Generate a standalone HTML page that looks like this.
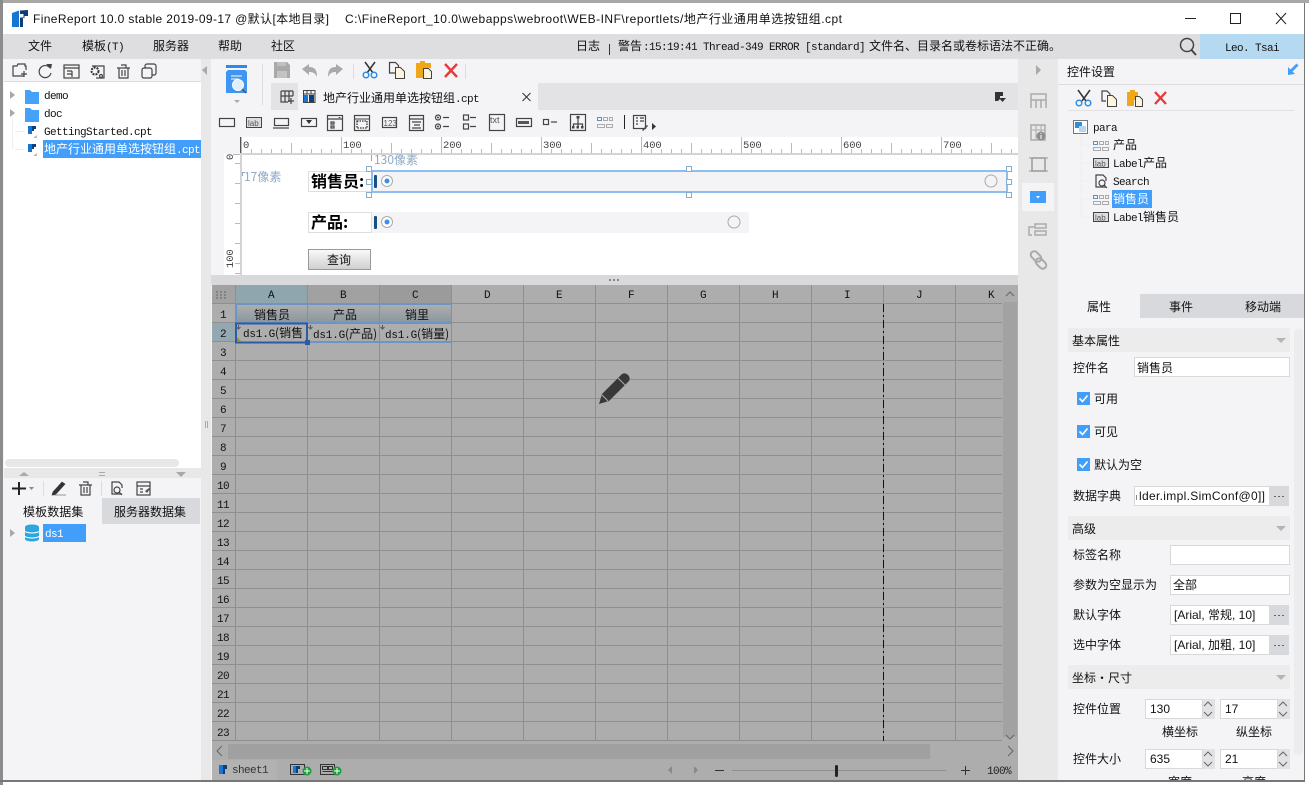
<!DOCTYPE html>
<html><head><meta charset="utf-8"><title>FineReport</title>
<style>
html,body{margin:0;padding:0;width:1309px;height:785px;overflow:hidden;background:#fff}
svg{display:block}
text{font-family:"WenQuanYi Zen Hei","Noto Sans CJK SC",sans-serif;font-size:12px;fill:#111;white-space:pre}
.m{font-family:"Liberation Mono","WenQuanYi Zen Hei",monospace;font-size:11px;letter-spacing:-.6px}
.r{font-family:"Liberation Mono",monospace;font-size:10.500px;letter-spacing:-.1px;fill:#444}
.a{font-family:"Liberation Sans","WenQuanYi Zen Hei",sans-serif;font-size:12px}
.c{text-anchor:middle}
.i{fill:none;stroke:#444;stroke-width:1.2}
.g{fill:none;stroke:#666;stroke-width:1.2}
.lb{fill:#8fa9c4;font-size:12px}
</style></head><body>
<svg width="1309" height="785" viewBox="0 0 1309 785" xmlns="http://www.w3.org/2000/svg">
<defs>
<linearGradient id="h" x1="0" y1="0" x2="0" y2="1"><stop offset="0" stop-color="#aeaeae"/><stop offset="1" stop-color="#8a979e"/></linearGradient>
<linearGradient id="b" x1="0" y1="0" x2="0" y2="1"><stop offset="0" stop-color="#fafafa"/><stop offset="1" stop-color="#cfcfcf"/></linearGradient>
<pattern id="gridc" x="236" y="0" width="72" height="785" patternUnits="userSpaceOnUse"><rect x="71" width="1" height="785" fill="#8f8f8f"/></pattern>
<pattern id="gridr" x="0" y="285" width="1309" height="19" patternUnits="userSpaceOnUse"><rect y="18" width="1309" height="1" fill="#8f8f8f"/></pattern>
<pattern id="rul" x="241" y="137" width="100" height="16" patternUnits="userSpaceOnUse">
<path d="M0.500 0V16M10.500 12V16M20.500 12V16M30.500 12V16M40.500 12V16M50.500 6V16M60.500 12V16M70.500 12V16M80.500 12V16M90.500 12V16" stroke="#bbb" fill="none"/></pattern>
</defs>

<!-- window -->
<rect width="1309" height="785" fill="#fff"/>
<rect x="0" y="0" width="1309" height="3" fill="#a8a8a6"/>
<rect x="0" y="0" width="3" height="785" fill="#8c8c8c"/>
<rect x="3" y="3" width="1301" height="31" fill="#fff"/>
<rect x="3" y="34" width="1301" height="25" fill="#dedee0"/>
<rect x="3" y="59" width="1301" height="721" fill="#f4f4f6"/>
<rect x="0" y="780" width="1305" height="2" fill="#777"/>
<rect x="1304" y="3" width="1" height="778" fill="#777"/>

<!-- title bar -->
<path d="M12 13l7-2.500V27h-7z" fill="#1677d2"/><path d="M20 10.500l8-.500v6h-3.500v2H23v9h-3z" fill="#0c3f78"/><path d="M20 14h3.500v3.500H20z" fill="#fff"/>
<text class="a" x="33" y="23" textLength="296" lengthAdjust="spacing">FineReport 10.0 stable 2019-09-17 @默认[本地目录]</text>
<text class="a" x="345" y="23" textLength="497" lengthAdjust="spacing">C:\FineReport_10.0\webapps\webroot\WEB-INF\reportlets/地产行业通用单选按钮组.cpt</text>
<path d="M1185 18.500h11" stroke="#222" fill="none"/>
<rect x="1230.500" y="13.500" width="10" height="10" fill="none" stroke="#222"/>
<path d="M1276 13l10 11M1286 13l-10 11" stroke="#222" fill="none"/>

<!-- menu -->
<text x="28" y="50">文件</text>
<text x="82" y="50">模板<tspan class="m">(T)</tspan></text>
<text x="153" y="50">服务器</text>
<text x="218" y="50">帮助</text>
<text x="271" y="50">社区</text>
<text x="576" y="50">日志</text>
<rect x="609" y="44" width="1" height="11" fill="#333"/>
<text x="618" y="50">警告</text>
<text class="m" x="643" y="50">:15:19:41 Thread-349 ERROR [standard]</text>
<text x="869" y="50">文件名、目录名或卷标语法不正确。</text>
<circle cx="1187" cy="45" r="6.500" fill="none" stroke="#444" stroke-width="1.500"/><path d="M1191.500 50l4.500 5" stroke="#444" stroke-width="2"/>
<rect x="1200" y="34" width="104" height="25" fill="#b5d9f1"/>
<text class="m c" x="1252" y="51">Leo. Tsai</text>

<!-- left panel -->
<rect x="4" y="82" width="197" height="386" fill="#fff"/>
<rect x="4" y="81" width="197" height="1" fill="#dcdcdc"/>
<rect x="201" y="59" width="10" height="721" fill="#e8e8e9"/>
<path d="M207 66l-5 4 5 5z" fill="#a9a9a9"/>
<path d="M205.500 421v7M207.500 421v7" stroke="#aaa" fill="none"/>
<!-- left toolbar -->
<path class="i" d="M24 76h-11V66h4l1-2h7v2h1v4M21 74h6M24 71v6"/>
<path d="M50 68a6 6 0 1 0 1 5" class="i" stroke-width="1.500"/><path d="M46 64l6 0-1 5z" fill="#444"/>
<rect class="i" x="64" y="65" width="15" height="13"/><path class="i" d="M64 68h15M67 71h5M67 74h5M72 71v6"/>
<path class="i" d="M92 66h12v12h-8"/><circle cx="95" cy="71" r="3.500" fill="none" stroke="#333" stroke-width="2" stroke-dasharray="2 1"/><circle cx="101" cy="76" r="1.500" class="i"/>
<path class="i" d="M117 68h13M119 68v10h9V68M121 65h5v3M122 70v6M125 70v6"/>
<rect class="i" x="142" y="68" width="10" height="10" rx="2"/><path class="i" d="M145 68v-2a2 2 0 0 1 2-2h7a2 2 0 0 1 2 2v7a2 2 0 0 1-2 2h-2"/>
<!-- left tree -->
<path d="M10 91l5 4-5 4zM10 109l5 4-5 4z" fill="#a8a8a8"/>
<path d="M15 131.500h10M15 149.500h10M12.500 118v31" stroke="#eee" fill="none"/>
<path d="M25 90h5l2 2h7v12H25z" fill="#46a1fa"/>
<path d="M25 108h5l2 2h7v12H25z" fill="#46a1fa"/>
<text class="m" x="44" y="99">demo</text>
<text class="m" x="44" y="117">doc</text>
<rect x="26" y="125" width="11" height="13" fill="#fff"/><path d="M28 126h4v8h-4z" fill="#1677d2"/><path d="M32 126h4v3h-2v2h-2z" fill="#0c3f78"/><path d="M33 138l4-3v3z" fill="#bbb"/>
<rect x="26" y="143" width="11" height="13" fill="#fff"/><path d="M28 144h4v8h-4z" fill="#1677d2"/><path d="M32 144h4v3h-2v2h-2z" fill="#0c3f78"/><path d="M33 156l4-3v3z" fill="#bbb"/>
<text class="m" x="44" y="135">GettingStarted.cpt</text>
<rect x="43" y="140" width="158" height="18" fill="#429efb"/>
<text x="44" y="153" style="fill:#fff">地产行业通用单选按钮组<tspan class="m" style="fill:#fff">.cpt</tspan></text>
<rect x="5" y="459" width="174" height="8" rx="4" fill="#e7e7e7"/>
<rect x="4" y="468" width="197" height="10" fill="#e8e8e9"/>
<path d="M19 476l5-4 5 4z" fill="#a9a9a9"/><path d="M176 472h10l-5 5z" fill="#a9a9a9"/><path d="M99 472.500h6M99 475.500h6" stroke="#aaa" fill="none"/>
<!-- data toolbar -->
<path d="M12 488.500h14M19 482v13" stroke="#222" stroke-width="2" fill="none"/><path d="M29 487h5l-2.500 3z" fill="#888"/>
<rect x="43" y="481" width="1" height="15" fill="#ddd"/><rect x="101" y="481" width="1" height="15" fill="#ddd"/>
<path d="M53 492l9-10 3 2-9 10-4 1zM52 495h14" fill="#333" stroke="#333" stroke-width=".6"/>
<path class="i" d="M79 485h13M81 485v10h9v-10M83 482h5v3M84 487v6M87 487v6"/>
<path class="i" d="M122 494h-10V482h7l3 3v3"/><circle cx="117" cy="490" r="3" class="i"/><path class="i" d="M119 492l3 3"/>
<rect class="i" x="137" y="482" width="13" height="13"/><path class="i" d="M137 486h13M140 489h3M140 492h3"/><path d="M145 491l4-3 1 1-3 4z" fill="#555"/>
<rect x="102" y="498" width="98" height="26" fill="#d8d9dc"/>
<text x="23" y="516" style="font-size:12px;letter-spacing:.1px">模板数据集</text>
<text x="114" y="516">服务器数据集</text>
<path d="M10 529l5 4-5 4z" fill="#a8a8a8"/>
<path d="M25 527a7 2.500 0 0 1 14 0v12a7 2.500 0 0 1-14 0z" fill="#2ba6e0"/><path d="M25 531a7 2 0 0 0 14 0M25 536a7 2 0 0 0 14 0" stroke="#fff" fill="none"/>
<rect x="43" y="524" width="43" height="18" fill="#429efb"/>
<text class="m" x="45" y="537" style="fill:#fff">ds1</text>

<!-- main toolbar -->
<rect x="226" y="65" width="21" height="3" fill="#2a8bef"/>
<path d="M228 70h17l2 2v21h-21V72z" fill="#3f96f2"/>
<path d="M231 76h11M231 79h8" stroke="#fff" fill="none"/>
<circle cx="238" cy="85" r="5.500" fill="#dfeefb" stroke="#fff"/><path d="M242 89l4 4" stroke="#555" stroke-width="1.500"/>
<path d="M234 100h6l-3 3z" fill="#aaa"/>
<rect x="262" y="64" width="1" height="41" fill="#ddd"/>
<path d="M274 62h13l3 3v13h-16z" fill="#a9a9a9"/><rect x="277" y="71" width="10" height="7" fill="#c3c3c3"/><rect x="277" y="62" width="9" height="4" fill="#bfbfbf"/>
<path d="M302 69l7-5v3c6 0 8 3 8 10-2-4-4-5-8-5v3z" fill="#a9a9a9"/>
<path d="M343 69l-7-5v3c-6 0-8 3-8 10 2-4 4-5 8-5v3z" fill="#a9a9a9"/>
<rect x="353" y="64" width="1" height="15" fill="#ddd"/>
<path d="M365 62l8 11M375 62l-8 11" stroke="#333" stroke-width="1.500" fill="none"/><circle cx="366" cy="75" r="2.800" fill="none" stroke="#2b8de8" stroke-width="1.500"/><circle cx="374" cy="75" r="2.800" fill="none" stroke="#2b8de8" stroke-width="1.500"/>
<path class="i" d="M395 73h-5.500V62.500h6l3 3v2"/><path d="M395.500 67.500h5l4 4v7h-9z" fill="#fdf5de" stroke="#444"/>
<path d="M416 63h4v-2h5v2h6v5h-7v10h-8z" fill="#f0a81a"/><path d="M423.500 68.500h5l3 3v7h-8z" fill="#fdf5de" stroke="#444"/>
<path d="M445 64l12 13M457 64l-12 13" stroke="#e63b3b" stroke-width="2.400" fill="none"/>
<rect x="465" y="64" width="1" height="15" fill="#ddd"/>

<!-- tab bar -->
<rect x="271" y="83" width="747" height="27" fill="#e3e3e5"/>
<rect x="298" y="83" width="240" height="27" fill="#f4f4f6"/>
<path class="i" d="M281 91h12M281 96h12M285 91v11M289 91v11M281 91v11h7M293 91v5M291 98v6M288 101h6"/>
<rect x="303.500" y="90.500" width="11.500" height="12" fill="none" stroke="#444"/><path d="M303 94h12M307 90v4M311 90v4" stroke="#444" fill="none"/><rect x="304" y="95" width="4" height="7" fill="#1677d2"/><rect x="309" y="95" width="5" height="7" fill="#0c3f78"/>
<text x="323" y="102">地产行业通用单选按钮组<tspan class="m">.cpt</tspan></text>
<path d="M522.500 93l8 8M530.500 93l-8 8" stroke="#333" fill="none"/>
<path d="M995 92h8v4h-3v3l-2 2h-3z" fill="#333"/><path d="M999 98h7l-3.500 4z" fill="#333"/>

<!-- widget toolbar -->
<rect class="i" x="219.500" y="118.500" width="15" height="8"/>
<rect x="246.500" y="117.500" width="15" height="10" fill="#ddd" stroke="#444"/><text class="a" x="248" y="126" style="font-size:8px;fill:#555">lab</text>
<rect class="i" x="274.500" y="118.500" width="14" height="7"/><path class="i" d="M273 128h16"/>
<rect class="i" x="301.500" y="118.500" width="15" height="8"/><path d="M306 120h6l-3 4z" fill="#333"/>
<rect class="i" x="327.500" y="115.500" width="15" height="15"/><path class="i" d="M327 119h15M331 122h3v2h-3zM331 126h3v2h-3z"/><path d="M338 117h3l-1.500 1z" fill="#333"/>
<rect class="i" x="354.500" y="115.500" width="15" height="15"/><path d="M354 119h15" stroke="#444"/><path d="M357 121h10v7h-10z" fill="none" stroke="#333" stroke-width="1.300" stroke-dasharray="1.500 1"/>
<rect class="i" x="382.500" y="117.500" width="14" height="10"/><text class="a" x="383.500" y="126" style="font-size:8px;fill:#555">123</text>
<rect class="i" x="409.500" y="115.500" width="14" height="15"/><path class="i" d="M409 119h15M412 122h9M414 125h6M412 128h9"/>
<circle cx="438" cy="117.500" r="2.500" class="i"/><circle cx="438" cy="126.500" r="2.500" class="i"/><circle cx="438" cy="117.500" r="1" fill="#444"/><circle cx="438" cy="126.500" r="1" fill="#444"/><path class="i" d="M443 117.500h6M443 126.500h6"/>
<rect class="i" x="463.500" y="115" width="5" height="5"/><rect class="i" x="463.500" y="124" width="5" height="5"/><path class="i" d="M470 117.500h6M470 126.500h6"/>
<rect class="i" x="489.500" y="114.500" width="15" height="16"/><text class="a" x="490" y="123" style="font-size:9px;fill:#555">txt</text>
<rect class="i" x="516.500" y="118.500" width="15" height="8"/><path d="M518 121h11v3h-11z" fill="#555"/>
<rect class="i" x="543.500" y="119.500" width="5" height="5"/><path class="i" d="M551 122h6"/>
<rect class="i" x="570.500" y="114.500" width="15" height="16"/><path class="i" d="M578 118v5M573.500 127v-3h9v3M578 123v4"/><rect x="576.500" y="116" width="3" height="2.500" fill="#444"/><rect x="572" y="126" width="2.500" height="2.500" fill="#444"/><rect x="576.500" y="126" width="2.500" height="2.500" fill="#444"/><rect x="581" y="126" width="2.500" height="2.500" fill="#444"/>
<path d="M597.500 117.500h4v3h-4z" fill="none" stroke="#6a8db8"/><path d="M603.500 117.500h4v3h-4zM609.500 117.500h3v3h-3zM597.500 124.500h7v3h-7zM606.500 124.500h6v3h-6z" fill="none" stroke="#aaa"/>
<rect x="624" y="115" width="1" height="14" fill="#222"/>
<rect class="i" x="633.500" y="115.500" width="12" height="13"/><path class="i" d="M636 118h2M640 118h4M636 121h2M640 121h4M636 124h2"/><path d="M642 130l5-5 1 1-5 5z" fill="#444"/>
<path d="M652 123l4 3.500-4 3.500z" fill="#333"/>

<!-- rulers -->
<rect x="241" y="137" width="777" height="16" fill="#fff"/>
<rect x="241" y="137" width="777" height="16" fill="url(#rul)"/>
<rect x="224" y="154" width="17" height="121" fill="#fff"/>
<rect x="241" y="153" width="777" height="2" fill="#d4d4d4"/>
<rect x="240" y="137" width="1" height="16" fill="#555"/>
<rect x="240" y="153" width="2" height="122" fill="#d4d4d4"/>
<rect x="242" y="155" width="776" height="120" fill="#fff"/>
<text class="r" x="243" y="148">0</text>
<text class="r" x="343" y="148">100</text>
<text class="r" x="443" y="148">200</text>
<text class="r" x="543" y="148">300</text>
<text class="r" x="643" y="148">400</text>
<text class="r" x="743" y="148">500</text>
<text class="r" x="843" y="148">600</text>
<text class="r" x="943" y="148">700</text>
<path d="M235 163.500h5M235 183.500h5M235 203.500h5M235 223.500h5M235 243.500h5M235 263.500h5M235 273.500h5M233 154.500h7" stroke="#bbb" fill="none"/>
<text class="r" transform="translate(233,160) rotate(-90)">0</text>
<text class="r" transform="translate(233,268) rotate(-90)">100</text>

<!-- parameter canvas -->
<text class="lb" x="374" y="164">130像素</text>
<path d="M371.500 155v6" stroke="#8fa9c4" fill="none"/>
<text class="lb" x="244" y="181">17像素</text>
<path d="M242 172.500h3M242.500 172v4" stroke="#8fa9c4" fill="none"/>
<rect x="308.500" y="171.500" width="63" height="20" fill="#fff" stroke="#ddd"/>
<text x="311" y="187" style="font-size:16px;font-weight:bold;fill:#000">销售员:</text>
<rect x="372" y="171" width="635" height="21" fill="#f4f4f6" stroke="#8dbef0" stroke-width="2"/>
<rect x="374" y="175" width="3" height="13" rx="1" fill="#1a4f82"/>
<circle cx="387" cy="181" r="5.500" fill="#fff" stroke="#aaa"/><circle cx="387" cy="181" r="2.500" fill="#3b8ff0"/>
<circle cx="991" cy="181" r="6" fill="#f4f4f6" stroke="#aaa"/>
<g fill="#fff" stroke="#8aaccc"><rect x="366.500" y="166.500" width="5" height="5"/><rect x="686.500" y="166.500" width="5" height="5"/><rect x="1006.500" y="166.500" width="5" height="5"/><rect x="366.500" y="179.500" width="5" height="5"/><rect x="1006.500" y="179.500" width="5" height="5"/><rect x="366.500" y="192.500" width="5" height="5"/><rect x="686.500" y="192.500" width="5" height="5"/><rect x="1006.500" y="192.500" width="5" height="5"/></g>
<rect x="308.500" y="212.500" width="63" height="20" fill="#fff" stroke="#ddd"/>
<text x="311" y="228" style="font-size:16px;font-weight:bold;fill:#000">产品:</text>
<rect x="372" y="212" width="377" height="21" fill="#f4f4f6"/>
<rect x="374" y="216" width="3" height="13" rx="1" fill="#1a4f82"/>
<circle cx="387" cy="222" r="5.500" fill="#fff" stroke="#aaa"/><circle cx="387" cy="222" r="2.500" fill="#3b8ff0"/>
<circle cx="734" cy="222" r="6" fill="#f4f4f6" stroke="#aaa"/>
<rect x="308.500" y="249.500" width="62" height="20" fill="url(#b)" stroke="#999"/>
<text class="c" x="339" y="264">查询</text>

<!-- splitter -->
<rect x="211" y="275" width="807" height="10" fill="#d9d9db"/>
<path d="M609 280h2M613 280h2M617 280h2" stroke="#888" stroke-width="2" fill="none"/>

<!-- grid -->
<rect x="212" y="285" width="806" height="495" fill="#adadad"/>
<rect x="236" y="285" width="766" height="456" fill="url(#gridc)"/>
<rect x="212" y="285" width="790" height="456" fill="url(#gridr)"/>
<rect x="235" y="285" width="1" height="456" fill="#8f8f8f"/>
<rect x="212" y="285" width="23" height="18" fill="#a2a2a2"/>
<path d="M216 292h2M220 292h2M224 292h2M216 295h2M220 295h2M224 295h2M216 298h2M220 298h2M224 298h2" stroke="#666" fill="none"/>
<rect x="236" y="285" width="71" height="18" fill="#8fa6af"/>
<rect x="308" y="285" width="71" height="18" fill="#a1a1a1"/>
<rect x="380" y="285" width="71" height="18" fill="#9b9b9b"/>
<rect x="212" y="323" width="23" height="18" fill="#93a8b0"/>
<rect x="236.500" y="304.500" width="71" height="18" fill="url(#h)" stroke="#6d94c4"/>
<rect x="307.500" y="304.500" width="72" height="18" fill="url(#h)" stroke="#6d94c4"/>
<rect x="379.500" y="304.500" width="72" height="18" fill="url(#h)" stroke="#6d94c4"/>
<rect x="307.500" y="323.500" width="72" height="19" fill="none" stroke="#6d94c4"/>
<rect x="379.500" y="323.500" width="72" height="19" fill="none" stroke="#6d94c4"/>
<rect x="236" y="323.500" width="71" height="19" fill="#adadad" stroke="#2a5ba6" stroke-width="2"/>
<rect x="305" y="340" width="5" height="5" fill="#2a5ba6"/>
<path d="M237 341v-4l4 4z" fill="#b28a1a"/>
<path d="M238.500 325v3M236.500 327l2 2 2-2M310.500 325v3M308.500 327l2 2 2-2M382.500 325v3M380.500 327l2 2 2-2" stroke="#555" fill="none"/>
<g>
<text class="m c" x="271" y="298">A</text><text class="m c" x="343" y="298">B</text><text class="m c" x="415" y="298">C</text><text class="m c" x="487" y="298">D</text><text class="m c" x="559" y="298">E</text><text class="m c" x="631" y="298">F</text><text class="m c" x="703" y="298">G</text><text class="m c" x="775" y="298">H</text><text class="m c" x="847" y="298">I</text><text class="m c" x="919" y="298">J</text><text class="m c" x="991" y="298">K</text>
</g>
<g>
<text class="m c" x="223" y="318">1</text><text class="m c" x="223" y="337">2</text><text class="m c" x="223" y="356">3</text><text class="m c" x="223" y="375">4</text><text class="m c" x="223" y="394">5</text><text class="m c" x="223" y="413">6</text><text class="m c" x="223" y="432">7</text><text class="m c" x="223" y="451">8</text><text class="m c" x="223" y="470">9</text><text class="m c" x="223" y="489">10</text><text class="m c" x="223" y="508">11</text><text class="m c" x="223" y="527">12</text><text class="m c" x="223" y="546">13</text><text class="m c" x="223" y="565">14</text><text class="m c" x="223" y="584">15</text><text class="m c" x="223" y="603">16</text><text class="m c" x="223" y="622">17</text><text class="m c" x="223" y="641">18</text><text class="m c" x="223" y="660">19</text><text class="m c" x="223" y="679">20</text><text class="m c" x="223" y="698">21</text><text class="m c" x="223" y="717">22</text><text class="m c" x="223" y="736">23</text>
</g>
<text class="c" x="272" y="319">销售员</text><text class="c" x="345" y="319">产品</text><text class="c" x="417" y="319">销里</text>
<text x="243" y="337"><tspan class="m" style="letter-spacing:-.2px">ds1.G</tspan>(销售</text>
<text x="313" y="338"><tspan class="m" style="letter-spacing:-.2px">ds1.G</tspan>(产品)</text>
<text x="385" y="338"><tspan class="m" style="letter-spacing:-.2px">ds1.G</tspan>(销量)</text>
<path d="M883.500 304V741" stroke="#111" stroke-dasharray="8 3 2 3" fill="none"/>
<path d="M599 404l3-10 20-20c2-1 4-1 6 1s2 4 1 6l-20 20z" fill="#383838"/><path d="M602 395l6 6M618 378l7 7" stroke="#adadad" fill="none"/>
<!-- scrollbars -->
<rect x="1002" y="285" width="16" height="456" fill="#adadad"/>
<rect x="1003" y="302" width="14" height="435" fill="#a2a2a2"/>
<path d="M1006 296l4-4 4 4M1006 735l4 4 4-4" stroke="#666" fill="none"/>
<rect x="212" y="741" width="806" height="19" fill="#adadad"/>
<rect x="228" y="744" width="702" height="15" fill="#a0a0a0"/>
<path d="M222 746l-5 5 5 5M1008 746l5 5-5 5" stroke="#666" fill="none"/>
<rect x="212" y="760" width="806" height="20" fill="#adadad"/>
<rect x="212" y="760" width="65" height="20" fill="#b2b2b2"/>
<path d="M219 765h4v9h-4z" fill="#1677d2"/><path d="M223 765h4v4h-2v5h-2z" fill="#0c3f78"/>
<text class="m" x="232" y="773" style="fill:#333">sheet1</text>
<rect x="290.500" y="764.500" width="14" height="10" fill="none" stroke="#333"/><path d="M293 766h3v7h-3z" fill="#1677d2"/><path d="M296 766h4v3h-2v4h-2z" fill="#0c3f78"/><circle cx="307" cy="771" r="4.500" fill="#1f9d3d"/><path d="M304 771h6M307 768v6" stroke="#fff" fill="none"/>
<rect x="320.500" y="764.500" width="14" height="10" fill="none" stroke="#333"/><path d="M322.500 766.500h5v3h-5zM328.500 766.500h4v3h-4zM322.500 771.500h10" fill="none" stroke="#333"/><circle cx="337" cy="771" r="4.500" fill="#1f9d3d"/><path d="M334 771h6M337 768v6" stroke="#fff" fill="none"/>
<path d="M672 766l-4 4 4 4zM694 766l4 4-4 4z" fill="#888"/>
<path d="M715 770.500h9" stroke="#333" fill="none"/>
<path d="M732 770.500h214" stroke="#8e8e8e" fill="none"/>
<rect x="835" y="765" width="3" height="12" rx="1.500" fill="#222"/>
<path d="M961 770.500h9M965.500 766v9" stroke="#333" fill="none"/>
<text class="m" x="987" y="774" style="fill:#222">100%</text>

<!-- right strip -->
<rect x="1018" y="59" width="40" height="721" fill="#e8e8e9"/>
<path d="M1036 65l5 5-5 5z" fill="#a8a8a8"/>
<path d="M1031 94h15v6h-15zM1031 100v8M1036 100v8M1041 100v8M1046 100v8" fill="none" stroke="#aaa" stroke-width="1.500"/>
<rect x="1031" y="125" width="14" height="15" fill="none" stroke="#aaa" stroke-width="1.500"/><path d="M1031 130h14M1036 125v15M1041 125v8" stroke="#aaa" fill="none"/><circle cx="1041" cy="136" r="4.500" fill="#8d8d8d"/><path d="M1041 133v1M1041 135v4" stroke="#fff" fill="none"/>
<rect x="1032" y="158" width="13" height="13" fill="none" stroke="#999" stroke-width="1.500"/><path d="M1029 158h3M1045 158h3M1029 171h3M1045 171h3" stroke="#999" fill="none"/>
<rect x="1022" y="183" width="32" height="28" fill="#f4f4f6"/>
<rect x="1030" y="191" width="16" height="12" fill="#429efb"/><path d="M1036 196h4l-2 2.500z" fill="#fff"/>
<path d="M1035 224h11v4h-11zM1035 231h11v4h-11zM1034 227h-5v8h3" fill="none" stroke="#aaa" stroke-width="1.500"/>
<rect x="1030" y="253" width="12" height="7" rx="3.500" fill="none" stroke="#aaa" stroke-width="2" transform="rotate(45 1036 256.500)"/>
<rect x="1035" y="260" width="12" height="7" rx="3.500" fill="none" stroke="#aaa" stroke-width="2" transform="rotate(45 1041 263.500)"/>

<!-- right panel -->
<text x="1067" y="76">控件设置</text>
<path d="M1288 75v-8l2.500 2.500 6-6 2 2-6 6 2.500 2.500z" fill="#429efb"/>
<rect x="1058" y="84" width="246" height="1" fill="#dcdcde"/>
<rect x="1068" y="110" width="226" height="1" fill="#e2e2e4"/>
<path d="M1078 90l8 11M1090 90l-8 11" stroke="#333" stroke-width="1.500" fill="none"/><circle cx="1079" cy="103" r="2.800" fill="none" stroke="#2b8de8" stroke-width="1.500"/><circle cx="1088" cy="103" r="2.800" fill="none" stroke="#2b8de8" stroke-width="1.500"/>
<path class="i" d="M1106 101h-4V91h5l3 3v2"/><path d="M1107.500 95.500h5l4 4v7h-9z" fill="#fdf5de" stroke="#444"/>
<path d="M1127 92h3v-2h5v2h3v8h-4v6h-7z" fill="#f0a81a"/><path d="M1135.500 96.500h4l3 3v7h-7z" fill="#fdf5de" stroke="#444"/>
<path d="M1155 92l11 12M1166 92l-11 12" stroke="#e63b3b" stroke-width="2.400" fill="none"/>
<rect x="1073.500" y="120.500" width="14" height="13" fill="#fff" stroke="#777"/><rect x="1075" y="122" width="7" height="6" fill="#2f8fd0"/><rect x="1079" y="126" width="7" height="6" fill="#b8d4f0"/>
<text class="m" x="1093" y="131">para</text>
<path d="M1081 134v83M1081 145h10M1081 163h10M1081 181h10M1081 199h10M1081 217h10" stroke="#eee" fill="none"/>
<g fill="none"><path d="M1093.500 141.500h4v3h-4z" stroke="#6a8db8"/><path d="M1099.500 141.500h4v3h-4zM1105.500 141.500h3v3h-3zM1093.500 147.500h7v3h-7zM1102.500 147.500h6v3h-6z" stroke="#aaa"/></g>
<text x="1113" y="149">产品</text>
<rect x="1093.500" y="158.500" width="15" height="9" fill="#ddd" stroke="#444"/><text class="a" x="1095" y="166.500" style="font-size:8px;fill:#555">lab</text>
<text x="1113" y="167"><tspan class="m">Label</tspan>产品</text>
<path class="i" d="M1106 187h-10V175h7l3 3v3"/><circle cx="1102" cy="183" r="3" class="i"/><path class="i" d="M1104 185l3 3"/>
<text class="m" x="1113" y="185">Search</text>
<g fill="none"><path d="M1093.500 195.500h4v3h-4z" stroke="#6a8db8"/><path d="M1099.500 195.500h4v3h-4zM1105.500 195.500h3v3h-3zM1093.500 201.500h7v3h-7zM1102.500 201.500h6v3h-6z" stroke="#aaa"/></g>
<rect x="1112" y="190" width="40" height="18" fill="#429efb"/>
<text x="1113" y="203" style="fill:#fff">销售员</text>
<rect x="1093.500" y="212.500" width="15" height="9" fill="#ddd" stroke="#444"/><text class="a" x="1095" y="220.500" style="font-size:8px;fill:#555">lab</text>
<text x="1113" y="221"><tspan class="m">Label</tspan>销售员</text>

<!-- property tabs -->
<rect x="1140" y="294" width="164" height="24" fill="#d8d9dc"/>
<text class="c" x="1099" y="311">属性</text><text class="c" x="1181" y="311">事件</text><text class="c" x="1263" y="311">移动端</text>
<rect x="1294" y="329" width="9" height="426" rx="4" fill="#ececee"/>
<rect x="1068" y="328" width="222" height="24" fill="#ececec"/>
<text x="1072" y="345">基本属性</text><path d="M1276 338h10l-5 5z" fill="#b5b5b5"/>
<text x="1073" y="372">控件名</text>
<rect x="1134.500" y="357.500" width="155" height="19" fill="#fff" stroke="#d8d8d8"/>
<text x="1137" y="372">销售员</text>
<g><rect x="1077" y="392" width="13" height="13" fill="#429efb"/><path d="M1079.500 398.500l3 3 5-6" stroke="#fff" stroke-width="1.600" fill="none"/></g>
<text x="1094" y="403">可用</text>
<g><rect x="1077" y="425" width="13" height="13" fill="#429efb"/><path d="M1079.500 431.500l3 3 5-6" stroke="#fff" stroke-width="1.600" fill="none"/></g>
<text x="1094" y="436">可见</text>
<g><rect x="1077" y="458" width="13" height="13" fill="#429efb"/><path d="M1079.500 464.500l3 3 5-6" stroke="#fff" stroke-width="1.600" fill="none"/></g>
<text x="1094" y="469">默认为空</text>
<text x="1073" y="500">数据字典</text>
<rect x="1134.500" y="486.500" width="135" height="19" fill="#fff" stroke="#d8d8d8"/>
<rect x="1269" y="486" width="20" height="20" fill="#d8d9dc"/><path d="M1274 496.500h2M1278 496.500h2M1282 496.500h2" stroke="#666" fill="none"/>
<text class="a" x="1139" y="500" textLength="126" lengthAdjust="spacing">lder.impl.SimConf@0]]</text>
<rect x="1136" y="495" width="1" height="5" fill="#888"/>
<rect x="1068" y="516" width="222" height="24" fill="#ececec"/>
<text x="1072" y="533">高级</text><path d="M1276 526h10l-5 5z" fill="#b5b5b5"/>
<text x="1073" y="559">标签名称</text>
<rect x="1170.500" y="545.500" width="119" height="19" fill="#fff" stroke="#d8d8d8"/>
<text x="1073" y="589">参数为空显示为</text>
<rect x="1170.500" y="575.500" width="119" height="19" fill="#fff" stroke="#d8d8d8"/>
<text x="1173" y="589">全部</text>
<text x="1073" y="619">默认字体</text>
<rect x="1170.500" y="605.500" width="99" height="19" fill="#fff" stroke="#d8d8d8"/>
<rect x="1269" y="605" width="20" height="20" fill="#d8d9dc"/><path d="M1274 615.500h2M1278 615.500h2M1282 615.500h2" stroke="#666" fill="none"/>
<text class="a" x="1174" y="619">[Arial, 常规, 10]</text>
<text x="1073" y="649">选中字体</text>
<rect x="1170.500" y="635.500" width="99" height="19" fill="#fff" stroke="#d8d8d8"/>
<rect x="1269" y="635" width="20" height="20" fill="#d8d9dc"/><path d="M1274 645.500h2M1278 645.500h2M1282 645.500h2" stroke="#666" fill="none"/>
<text class="a" x="1174" y="649">[Arial, 加粗, 10]</text>
<rect x="1068" y="665" width="222" height="24" fill="#ececec"/>
<text x="1072" y="682">坐标・尺寸</text><path d="M1276 675h10l-5 5z" fill="#b5b5b5"/>
<text x="1073" y="713">控件位置</text>
<rect x="1145.500" y="699.500" width="57" height="19" fill="#fff" stroke="#d8d8d8"/><rect x="1203" y="699" width="12" height="20" fill="#e2e2e4"/>
<rect x="1220.500" y="699.500" width="57" height="19" fill="#fff" stroke="#d8d8d8"/><rect x="1278" y="699" width="12" height="20" fill="#e2e2e4"/>
<text class="a" x="1150" y="713">130</text><text class="a" x="1225" y="713">17</text>
<path d="M1204 706l4-4 4 4M1204 712l4 4 4-4M1279 706l4-4 4 4M1279 712l4 4 4-4" stroke="#666" fill="none"/>
<text class="c" x="1180" y="736">横坐标</text><text class="c" x="1254" y="736">纵坐标</text>
<text x="1073" y="763">控件大小</text>
<rect x="1145.500" y="749.500" width="57" height="19" fill="#fff" stroke="#d8d8d8"/><rect x="1203" y="749" width="12" height="20" fill="#e2e2e4"/>
<rect x="1220.500" y="749.500" width="57" height="19" fill="#fff" stroke="#d8d8d8"/><rect x="1278" y="749" width="12" height="20" fill="#e2e2e4"/>
<text class="a" x="1150" y="763">635</text><text class="a" x="1225" y="763">21</text>
<path d="M1204 756l4-4 4 4M1204 762l4 4 4-4M1279 756l4-4 4 4M1279 762l4 4 4-4" stroke="#666" fill="none"/>
<svg x="1058" y="770" width="246" height="10"><text class="c" x="122" y="16">宽度</text><text class="c" x="196" y="16">高度</text></svg>
</svg>
</body></html>
